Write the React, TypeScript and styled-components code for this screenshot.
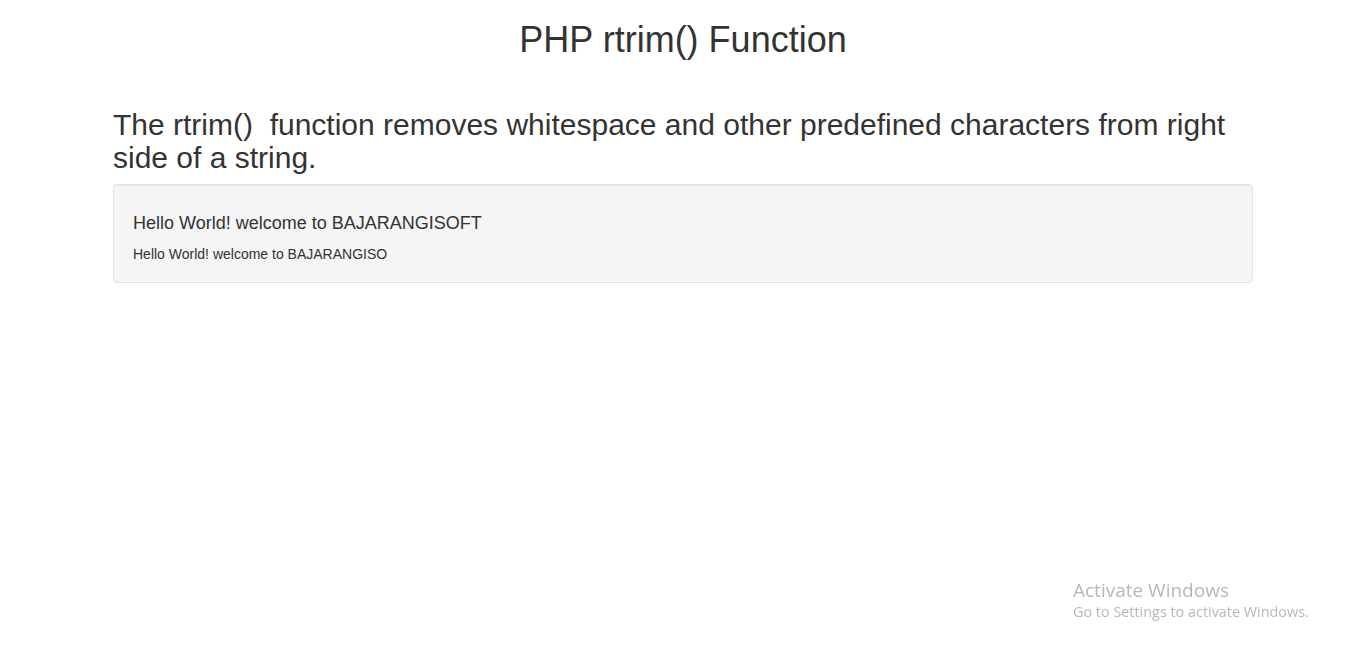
import { FC } from 'react';
import styled, { createGlobalStyle } from 'styled-components';

const GlobalStyle = createGlobalStyle`
  html, body {
    margin: 0;
    padding: 0;
    background: #fff;
  }
  body {
    font-family: 'Liberation Sans', Arial, Helvetica, sans-serif;
    font-size: 14px;
    line-height: 1.42857;
    color: #333;
  }
  * {
    box-sizing: border-box;
  }
`;

const Container = styled.div`
  width: 1170px;
  margin: 0 auto;
  padding: 0 15px;
`;

const PageTitle = styled.h1`
  margin: 20px 0 10px;
  font-size: 36px;
  font-weight: 500;
  line-height: 1.1;
  text-align: center;
`;

const Lead = styled.h2`
  margin: 48px 0 10px;
  font-size: 30px;
  font-weight: 500;
  line-height: 1.1;
`;

// bootstrapの.well
const Well = styled.div`
  min-height: 20px;
  padding: 19px 19px 17px;
  margin-bottom: 20px;
  background-color: #f5f5f5;
  border: 1px solid #e3e3e3;
  border-radius: 4px;
  box-shadow: inset 0 1px 1px rgba(0, 0, 0, 0.05);
`;

const Output = styled.h4`
  margin: 10px 0 12px;
  font-size: 18px;
  font-weight: 500;
  line-height: 1.1;
`;

const Trimmed = styled.p`
  margin: 0;
  font-size: 14px;
`;

// 右下の「Windowsのライセンス認証」透かし
const Watermark = styled.div`
  position: fixed;
  left: 1073px;
  top: 578px;
  font-family: 'Open Sans', 'Noto Sans', sans-serif;
  color: #b8b8b8;
  pointer-events: none;
`;

const WatermarkTitle = styled.div`
  font-size: 19px;
  line-height: 24px;
`;

const WatermarkText = styled.div`
  font-size: 14.4px;
  line-height: 20px;
`;

const App: FC = () => {
  const text = 'Hello World! welcome to BAJARANGISOFT';
  const trimmed = text.replace(/[FT]+$/, '');

  return (
    <>
      <GlobalStyle />
      <Container>
        <PageTitle>PHP rtrim() Function</PageTitle>
        <Lead>
          The rtrim()&nbsp; function removes whitespace and other predefined characters from right side of a
          string.
        </Lead>
        <Well>
          <Output>{text}</Output>
          <Trimmed>{trimmed}</Trimmed>
        </Well>
      </Container>
      <Watermark>
        <WatermarkTitle>Activate Windows</WatermarkTitle>
        <WatermarkText>Go to Settings to activate Windows.</WatermarkText>
      </Watermark>
    </>
  );
};

export default App;
